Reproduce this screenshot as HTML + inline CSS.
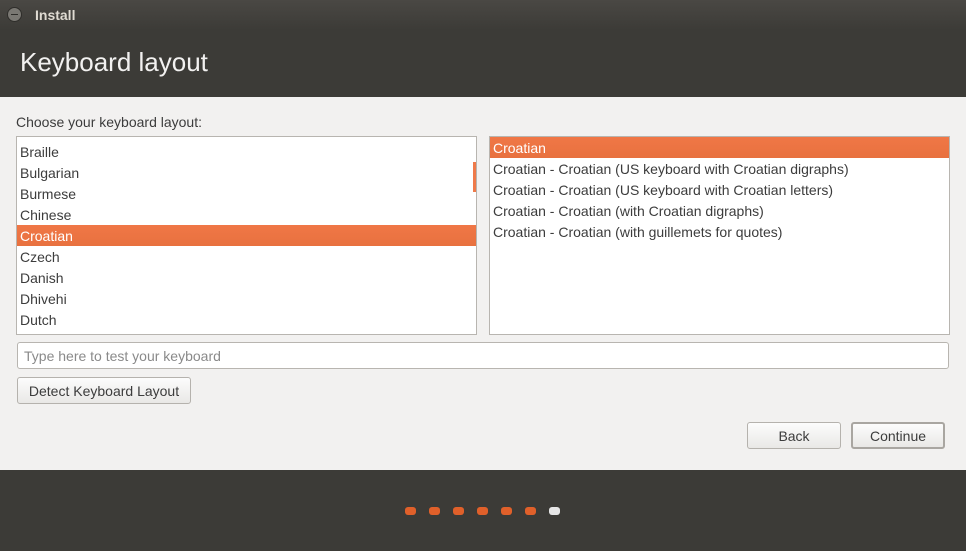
<!DOCTYPE html><html><head><style>
body{margin:0;width:966px;height:551px;overflow:hidden;background:#f2f1f0;font-family:"Liberation Sans",sans-serif;font-size:14px;color:#3c3c3c;position:relative}
.abs{position:absolute}
.hdr{left:0;top:0;width:966px;height:97px;background:linear-gradient(#4a4844,#3c3b37 30px,#3c3b37)}
.list{background:#fff;border:1px solid #b8b5b0;box-sizing:border-box}
.row{height:21px;line-height:23px;padding-left:3px;white-space:nowrap}
.sel{background:linear-gradient(#f07746,#e8713f);color:#fff}
.btn{border:1px solid #b5b2ad;border-radius:3px;background:linear-gradient(#fcfcfc,#e9e8e6);box-sizing:border-box;text-align:center;font-size:14px;color:#3c3c3c}
.dot{top:507px;width:11px;height:8px;border-radius:3px;background:#e0602a}
</style></head><body>
<div class="abs hdr"></div>
<div class="abs" style="left:7px;top:7px;width:15px;height:15px;border-radius:50%;background:#7a7873;border:1px solid #2e2d2a;box-sizing:border-box"></div>
<div class="abs" style="left:11px;top:14px;width:7px;height:1px;background:#2e2d2a"></div>
<div class="abs" style="left:35px;top:7px;color:#dfdbd2;font-weight:bold;font-size:14px">Install</div>
<div class="abs" style="left:20px;top:47px;color:#f2f1f0;font-size:26px">Keyboard layout</div>
<div class="abs" style="left:16px;top:114px">Choose your keyboard layout:</div>
<div class="abs list" style="left:16px;top:136px;width:461px;height:199px;padding-top:4px">
<div class="row">Braille</div><div class="row">Bulgarian</div><div class="row">Burmese</div><div class="row">Chinese</div><div class="row sel">Croatian</div><div class="row">Czech</div><div class="row">Danish</div><div class="row">Dhivehi</div><div class="row">Dutch</div>
</div>
<div class="abs" style="left:473px;top:162px;width:3px;height:30px;background:#ef7a4a"></div>
<div class="abs list" style="left:489px;top:136px;width:461px;height:199px">
<div class="row sel">Croatian</div><div class="row">Croatian - Croatian (US keyboard with Croatian digraphs)</div><div class="row">Croatian - Croatian (US keyboard with Croatian letters)</div><div class="row">Croatian - Croatian (with Croatian digraphs)</div><div class="row">Croatian - Croatian (with guillemets for quotes)</div>
</div>
<div class="abs" style="left:17px;top:342px;width:932px;height:27px;border:1px solid #b8b5b0;border-radius:3px;background:#fff;box-sizing:border-box;padding-left:6px;line-height:27px;color:#8a8a8a">Type here to test your keyboard</div>
<div class="abs btn" style="left:17px;top:377px;width:174px;height:27px;line-height:27px">Detect Keyboard Layout</div>
<div class="abs btn" style="left:747px;top:422px;width:94px;height:27px;line-height:27px">Back</div>
<div class="abs btn" style="left:851px;top:422px;width:94px;height:27px;line-height:25px;border:2px solid #a9a6a1">Continue</div>
<div class="abs" style="left:0;top:470px;width:966px;height:81px;background:#3c3b37"></div>
<div class="abs dot" style="left:405px"></div><div class="abs dot" style="left:429px"></div><div class="abs dot" style="left:453px"></div><div class="abs dot" style="left:477px"></div><div class="abs dot" style="left:501px"></div><div class="abs dot" style="left:525px"></div><div class="abs dot" style="left:549px;background:#e6e6e6"></div>
</body></html>
